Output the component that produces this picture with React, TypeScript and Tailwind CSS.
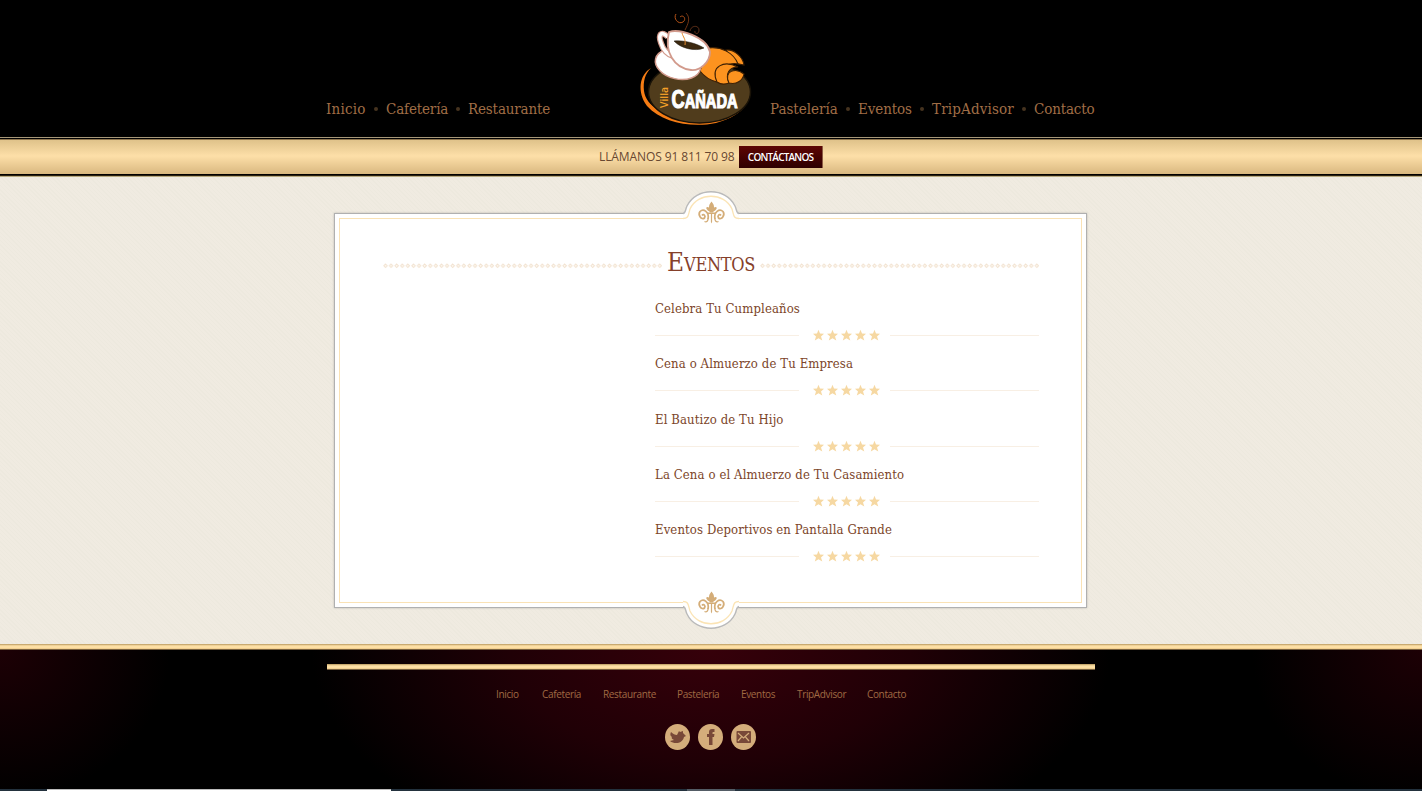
import React from "react";

const serif = "font-['DejaVu_Serif_Condensed','DejaVu_Serif',serif] [font-stretch:condensed]";

type NavItem = { label: string; w: string; sp: string };

const left: NavItem[] = [
  { label: "Inicio", w: "w-[40px]", sp: "tracking-[0.2px]" },
  { label: "Cafetería", w: "w-[62px]", sp: "tracking-[-0.15px]" },
  { label: "Restaurante", w: "w-[82px]", sp: "tracking-[-0.15px]" },
];
const right: NavItem[] = [
  { label: "Pastelería", w: "w-[68px]", sp: "tracking-[0px]" },
  { label: "Eventos", w: "w-[54px]", sp: "tracking-[-0.1px]" },
  { label: "TripAdvisor", w: "w-[82px]", sp: "tracking-[0.15px]" },
  { label: "Contacto", w: "w-[60px]", sp: "tracking-[-0.15px]" },
];

function Nav({ items }: { items: NavItem[] }) {
  return (
    <nav className={`flex items-center text-[15px] leading-5 text-[#a06e46] ${serif}`}>
      {items.map((it, i) => (
        <React.Fragment key={it.label}>
          {i > 0 && <span className="mx-2 h-1 w-1 shrink-0 rounded-full bg-[#46331f]" />}
          <a className={`whitespace-nowrap ${it.w} ${it.sp}`}>{it.label}</a>
        </React.Fragment>
      ))}
    </nav>
  );
}

function Logo() {
  return (
    <svg width="135" height="130" viewBox="0 0 135 130" className="block">
      <path d="M21 68C9 75 7 92 17 106C32 123 62 128 86 123C101 119 111 112 115 106C101 117 82 122 61 120C34 117 16 106 14 91C13 81 15 74 21 68Z" fill="#f57c14" />
      <ellipse cx="69.5" cy="92" rx="51" ry="31" fill="#503c1c" stroke="#191207" strokeWidth="1.5" />
      <g fill="#fd931f" stroke="#3c2005" strokeWidth="1.1">
        <path d="M96 50C104 49 113 57 114 65L104 63Z" />
        <path d="M78 48C91 46 104 53 108 64C99 62 90 67 87 82C79 80 73 75 70 71Z" />
        <path d="M87 82C80 66 94 60 108 67C99 67 95 74 99 83C94 85 90 84 87 82Z" />
        <path d="M99 83C93 71 106 67 114 74C113 80 107 85 99 83Z" />
      </g>
      <ellipse cx="48" cy="64" rx="23" ry="15" transform="rotate(13 48 64)" fill="#fff" stroke="#d29a8c" strokeWidth="1.5" />
      <path d="M38 37C31 30 28 35 31 43C33 50 38 55 43 56" fill="none" stroke="#d29a8c" strokeWidth="6" />
      <path d="M38 37C31 30 28 35 31 43C33 50 38 55 43 56" fill="none" stroke="#fff" strokeWidth="3.6" />
      <path d="M39 32C49 28 77 37 80 52C80 62 70 71 61 70C44 68 34 52 39 32Z" fill="#fff" stroke="#d29a8c" strokeWidth="1.8" />
      <path d="M44 41C53 40 66 43 74 48C65 52 50 48 44 41Z" fill="#3c2910" stroke="#17120a" strokeWidth=".5" />
      <path d="M46 14C43 18 48 25 53 22C57 19 53 14 50 17" fill="none" stroke="#b85418" strokeWidth="1" />
      <path d="M56 13C61 18 58 24 55 30" fill="none" stroke="#7a3a16" strokeWidth=".9" />
      <path d="M52 33C53 37 56 39 55 45" fill="none" stroke="#e58a2c" strokeWidth="1" />
      <path d="M60 31C61 25 69 25 69 30C69 35 64 34 65 31" fill="none" stroke="#6a351c" strokeWidth=".9" />
      <text transform="translate(38 108) rotate(-90)" fontFamily="Open Sans, sans-serif" fontSize="10.5" fontWeight="600" fill="#f5a128" textLength="21" lengthAdjust="spacingAndGlyphs">Villa</text>
      <text x="41.5" y="108" fontFamily="Liberation Sans Narrow, Liberation Sans, sans-serif" fontWeight="700" fill="#fff" stroke="#fff" strokeWidth="1.2" textLength="66" lengthAdjust="spacingAndGlyphs">
        <tspan fontSize="25">C</tspan><tspan fontSize="20">AÑADA</tspan>
      </text>
    </svg>
  );
}

function Fleur() {
  return (
    <g fill="#d4ad78">
      <path d="M0-11.500C2-9 2.500-8 2.500-5.500C5-7 6-5 4.500-3.500C3.500-2 2-2 1.500-.5H-1.500C-2-2-3.500-2-4.500-3.500C-6-5-5-7-2.500-5.500C-2.500-8-2-9 0-11.500Z" />
      <rect x="-4.500" y="-0.500" width="9" height="1.500" />
      <path d="M-.6 1H.6V9L0 10.500L-.6 9Z" />
      <g fill="none" stroke="#d4ad78">
        <path d="M-3.500 6C-2-1-8-5-11.500-1.500C-14 2-10 7.500-7 5C-5.500 2.500-8 .5-9.500 2.500" strokeWidth="1.700" />
        <path d="M3.500 6C2-1 8-5 11.500-1.500C14 2 10 7.500 7 5C5.500 2.500 8 .5 9.500 2.500" strokeWidth="1.700" />
        <path d="M-3.500 5C-3 8-5 9.500-7 8.500M3.500 5C3 8 5 9.500 7 8.500" strokeWidth="1.300" />
      </g>
    </g>
  );
}

function Crest({ flip = false }: { flip?: boolean }) {
  return (
    <svg width="60" height="40" viewBox="0 0 60 40" className="block">
      <g transform={flip ? "translate(0 40) scale(1 -1)" : undefined}>
        <path d="M2 22.500C5 22 4 19 6 15C15-4 45-4 54 15C56 19 55 22 58 22.500V40H2Z" fill="#fff" />
        <path d="M2 22.500C5 22 4 19 6 15C15-4 45-4 54 15C56 19 55 22 58 22.500" fill="none" stroke="#bababa" strokeWidth="1.400" />
        <path d="M2 27.500C8 27.500 7 24 9 18C17 1 43 1 51 18C53 24 52 27.500 58 27.500" fill="none" stroke="#fbe4b5" strokeWidth="1.300" />
      </g>
      <g transform={flip ? "translate(30.500 14)" : "translate(30.500 22)"}><Fleur /></g>
    </svg>
  );
}

function Dots() {
  return (
    <svg width="279" height="6" className="mt-1 block shrink-0">
      <defs>
        <pattern id="beads" width="5.6" height="6" patternUnits="userSpaceOnUse">
          <path d="M2.500 1L4.200 2.800L2.500 4.600L.8 2.800Z" fill="#fdfaf4" stroke="#f2e2d0" strokeWidth="1" />
        </pattern>
      </defs>
      <rect width="279" height="6" fill="url(#beads)" />
    </svg>
  );
}

function Stars() {
  return (
    <svg width="70" height="13" viewBox="0 0 70 13" className="block">
      {[0, 1, 2, 3, 4].map((i) => (
        <path key={i} transform={`translate(${i * 14} 0)`} d="M6.500 .8L8 4.600L12 4.800L9 7.400L10.300 11.500L6.500 9.200L2.800 11.500L4 7.400L1 4.800L5 4.600Z" fill="#f6d8a2" />
      ))}
    </svg>
  );
}

const events = [
  { t: "Celebra Tu Cumpleaños", h: "h-[55px]" },
  { t: "Cena o Almuerzo de Tu Empresa", h: "h-[56px]" },
  { t: "El Bautizo de Tu Hijo", h: "h-[55px]" },
  { t: "La Cena o el Almuerzo de Tu Casamiento", h: "h-[55px]" },
  { t: "Eventos Deportivos en Pantalla Grande", h: "h-[55px]" },
];

const footerLinks = [
  ["Inicio", "w-[46px]"], ["Cafetería", "w-[61px]"], ["Restaurante", "w-[74px]"], ["Pastelería", "w-[64px]"],
  ["Eventos", "w-[56px]"], ["TripAdvisor", "w-[70px]"], ["Contacto", "w-[42px]"],
];

const goldBar = "bg-[linear-gradient(#c9aa70_0_1px,#eed096_1px_2px,#fddfa4_2px_4px,#f2d092_4px_5px,#79613f_5px_6px)]";

export default function App() {
  return (
    <div className="flex h-[791px] w-[1422px] flex-col overflow-hidden bg-black">
      <header className="flex h-[137px] shrink-0 bg-black pl-[326px]">
        <div className="w-[304px] pt-[99px]"><Nav items={left} /></div>
        <div className="w-[140px]"><Logo /></div>
        <div className="pt-[99px]"><Nav items={right} /></div>
      </header>
      <div className="flex h-10 shrink-0 items-start bg-[linear-gradient(#a69778_0_1px,#000_1px_2px,#8d744d_2px_3px,#dfc28a_3px,#fddfa8_19px,#d9b880_37px,#000_37px_38px,#292011_38px_39px,#b8aa80_39px)] pl-[599px] pt-[9px]">
        <span className="w-[140px] whitespace-nowrap font-['Open_Sans',sans-serif] text-[12px] leading-[22px] tracking-[-0.1px] text-[#684831]">LLÁMANOS 91 811 70 98</span>
        <button className="h-[22px] w-[84px] whitespace-nowrap border-r border-[#8b5b43] bg-linear-to-b from-[#5e0704] to-[#2e0000] font-['Open_Sans',sans-serif] text-[10px] font-semibold leading-[21px] tracking-[-0.8px] text-white">CONTÁCTANOS</button>
      </div>
      <main className="flex h-[467px] shrink-0 flex-col bg-[#eeeae0] bg-[repeating-linear-gradient(45deg,#ede9de_0_1px,#f0ebe1_1px_3px)] pl-[334px] pt-[36px]">
        <section className="relative h-[395px] w-[753px] border border-[#b0b0b0] bg-white p-1 shadow-[0_0_2px_#bcb9b1]">
          <div className="flex h-full flex-col border border-[#fae2b5] pl-[43px] pt-[27px]">
            <div className="flex h-[36px] w-[656px] items-center justify-between">
              <Dots />
              <h1 className={`-mt-0.5 whitespace-nowrap text-[26px] leading-[34px] text-[#85402a] ${serif}`}>E<span className="text-[18px] tracking-[-0.3px]">VENTOS</span></h1>
              <Dots />
            </div>
            <ul className="ml-[272px] mt-[14px] w-[384px]">
              {events.map((e) => (
                <li key={e.t} className={e.h}>
                  <p className={`h-[33px] whitespace-nowrap pt-[3px] text-[13px] leading-5 tracking-[0.11px] text-[#7c4529] ${serif}`}>{e.t}</p>
                  <div className="flex items-center">
                    <span className="h-px w-[144px] bg-[#f8efe4]" />
                    <span className="ml-[13px] mr-2"><Stars /></span>
                    <span className="h-px flex-1 bg-[#f8efe4]" />
                  </div>
                </li>
              ))}
            </ul>
          </div>
          <div className="absolute -top-[23px] left-[346px]"><Crest /></div>
          <div className="absolute -bottom-[22px] left-[346px]"><Crest flip /></div>
        </section>
      </main>
      <div className={`h-1.5 shrink-0 ${goldBar}`} />
      <footer className="flex h-[139px] shrink-0 flex-col items-center bg-black bg-[radial-gradient(ellipse_400px_220px_at_711px_0,#36000a,#200006_50%,#000)]">
        <div className="flex h-full w-full flex-col items-center bg-[radial-gradient(ellipse_170px_150px_at_0_0,#290007b3,transparent),radial-gradient(ellipse_170px_150px_at_100%_0,#290007b3,transparent)] pt-[14px]">
          <div className={`h-1.5 w-[768px] ${goldBar}`} />
          <nav className="mt-[16px] flex w-[768px] pl-[169px] font-['Open_Sans',sans-serif] text-[10px] leading-4 tracking-[-0.35px] text-[#a06a43]">
            {footerLinks.map(([l, w]) => <a key={l} className={`whitespace-nowrap ${w}`}>{l}</a>)}
          </nav>
          <div className="mr-px mt-[22px] flex gap-2">
            <svg width="25" height="26" viewBox="0 0 25 26"><ellipse cx="12.5" cy="13" rx="12.5" ry="13" fill="#d4ad7b" /><path d="M6 8C8 10 10 11 12 11L14 7L15 8L18 7L18 9L21 12L19 13C18 19 10 21 5 17L9 16C7 15 6 14 7 13C5 12 5 10 6 8Z" fill="#784838" /></svg>
            <svg width="25" height="26" viewBox="0 0 25 26"><ellipse cx="12.5" cy="13" rx="12.5" ry="13" fill="#d4ad7b" /><path d="M11 21V13H9V10H11V8Q11 5 14 5H16.500V8H15Q14.500 8 14.500 9V10H16.500L16 13H14.500V21Z" fill="#784838" /></svg>
            <svg width="25" height="26" viewBox="0 0 25 26"><ellipse cx="12.5" cy="13" rx="12.5" ry="13" fill="#d4ad7b" /><rect x="5.5" y="7" width="14.5" height="12" rx="1" fill="#784838" /><path d="M7 9L12.500 14L18 9M7 17L10.500 13M18 17L14.500 13" fill="none" stroke="#d4ad7b" strokeWidth="1.2" /></svg>
          </div>
        </div>
      </footer>
      <div className="flex h-0.5 shrink-0 bg-[#23313d]">
        <span className="ml-[47px] w-[344px] border-t border-[#bcbcbc] bg-white" />
        <span className="ml-[296px] w-12 bg-[#535c65]" />
      </div>
    </div>
  );
}
